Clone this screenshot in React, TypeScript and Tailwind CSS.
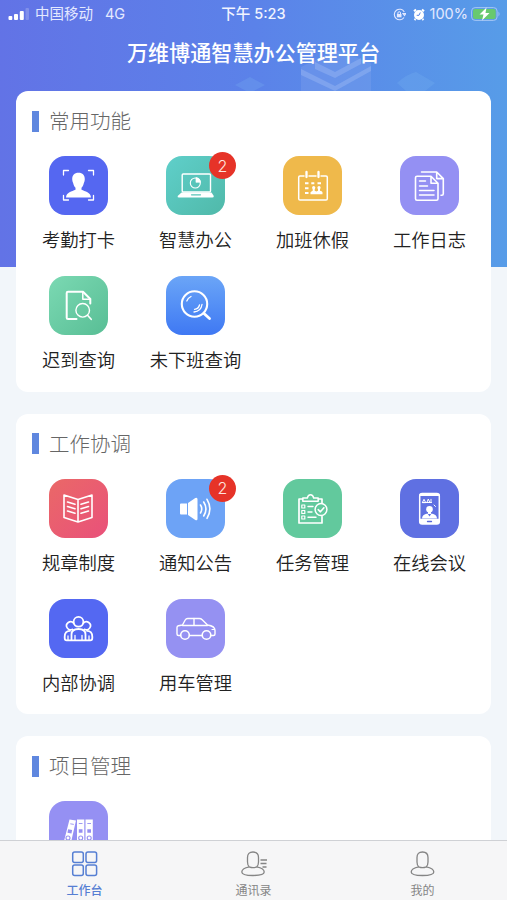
import React from 'react';

interface FeatureItem {
  label?: string;
  tile: string;
  icon: React.ReactNode;
  badge?: number;
}

interface SectionProps {
  title: string;
  items: FeatureItem[];
}

const PunchIcon = () => (
  <>
    <path d="M14.500 19v-4.500h5M39.500 14.500h5V19M14.500 39.500V44h5M39.500 44h5v-4.500" strokeWidth="1.300" />
    <path d="M29.500 16.800c4.200 0 6.300 2.500 6.300 6.500 0 1.500-.4 2.800-1 4-.5 2.500-1.300 3.500-2.300 4.500v2c3.500 1.600 9.300 2.500 9.500 7.700H17c.2-5.200 6-6.100 9.500-7.700v-2c-1-1-1.800-2-2.300-4.500-.6-1.200-1-2.500-1-4 0-4 2.100-6.500 6.300-6.500z" fill="white" stroke="none" />
  </>
);

const LaptopIcon = () => (
  <>
    <rect x="16.200" y="18" width="28.300" height="18" rx="1" strokeWidth="1.400" />
    <path d="M15.500 36.500h30l2.300 3.500q0 1.500-1.500 1.500H13q-1.800 0-1.300-1.500z" fill="white" stroke="none" />
    <path d="M25.500 38.800h9" stroke="#56c3b8" strokeWidth="1.200" />
    <circle cx="29.300" cy="27" r="5" strokeWidth="1.100" />
    <path d="M30 26v-4.500a5 5 0 0 1 4.500 4.500z" fill="white" strokeWidth="0.700" />
  </>
);

const CalendarIcon = () => (
  <>
    <path d="M21 20H17q-1.300 0-1.300 1.300v21.400q0 1.300 1.300 1.300h26q1.300 0 1.300-1.300V21.300Q44.300 20 43 20h-5M26 20h7" strokeWidth="1.500" />
    <path d="M23.500 16v5M35.500 16v5" strokeWidth="2.300" />
    <path d="M22 27.300h3.500M28.300 27.300h3M34.500 27.300h3.500M22 32.200h3.500M22 37h3.500" strokeWidth="1.900" strokeLinecap="butt" />
    <circle cx="30.700" cy="31.700" r="1.600" fill="white" stroke="none" />
    <circle cx="36" cy="31.700" r="1.600" fill="white" stroke="none" />
    <path d="M27.500 38.300v-2q1.500-1.500 2.200-1.500v-2h2v2l1.700.7 1.600-.7v-2h2v2q2 0 2.500 1.500v2z" fill="white" stroke="none" />
  </>
);

const JournalIcon = () => (
  <>
    <path d="M31 20.300H17q-1.500 0-1.500 1.500v21q0 1.500 1.500 1.500h19.500q1.500 0 1.500-1.500V27.200zM31 20.500v6.700h6.800" strokeWidth="1.600" />
    <path d="M21.500 16h15.200l6.600 6.600v15.200q0 1.400-1.400 1.400H41M36.700 16v6.600h6.600" strokeWidth="1.600" />
    <path d="M19.500 25h6M19.500 30h8M19.500 34.500h14.500M19.500 39h14.500" strokeWidth="1.500" />
  </>
);

const DocSearchIcon = () => (
  <>
    <path d="M27.500 43H19q-1.300 0-1.300-1.300V17q0-1.300 1.300-1.300h15l7.300 7.300v4.500" strokeWidth="2" />
    <path d="M33.800 16v7.300h7.300" strokeWidth="1.500" />
    <circle cx="33.700" cy="34.300" r="6.800" strokeWidth="1.400" />
    <path d="M38.500 39.300l3.700 4" strokeWidth="1.600" />
  </>
);

const MagnifierIcon = () => (
  <>
    <circle cx="28.500" cy="28" r="12.700" strokeWidth="2.100" />
    <path d="M38 37.500l5.500 5" strokeWidth="2.800" />
    <path d="M20.800 25q1-3 4.200-4.500M28 36q7-.5 8-7.500M28.500 33.300q4-.3 5-4.300" strokeWidth="1.300" />
  </>
);

const BookIcon = () => (
  <>
    <path d="M29 20.500L15 16v22.500l14 4.500 14-4.500V16zM29 20.500V43" strokeWidth="1.600" />
    <path d="M18.500 23l7.500 2.300M18.500 27.500l7.500 2.300M18.500 32l7.500 2.300M39.500 23L32 25.300M39.500 27.500L32 29.800M39.500 32L32 34.300" strokeWidth="1.600" />
  </>
);

const SpeakerIcon = () => (
  <>
    <path d="M15 24.500h6v11h-6q-1 0-1-1v-9q0-1 1-1zM22 24l7.300-5q2.200-1 2.200 1.200v19.600q0 2.200-2.200 1.200L22 36z" fill="white" stroke="none" />
    <path d="M34.500 26q2.500 4 0 8M37.700 23q4.500 7 0 14M41 20.300q5.800 9.500 0 19" strokeWidth="1.600" />
  </>
);

const ClipboardIcon = () => (
  <>
    <path d="M19.500 20H16v24h23v-6.500M39 24v-4h-3.500" strokeWidth="1.700" />
    <path d="M19.800 22.200V19h4.500q.7-3.300 3.200-3.300t3.200 3.300h4.500v3.200z" strokeWidth="1.500" />
    <path d="M18.800 26h3v3h-3zM18.800 31.500h3v3h-3zM18.800 37h3v3h-3z" strokeWidth="1.200" />
    <path d="M25 27.500h5M25 33h4M25 38.300h8" strokeWidth="1.400" />
    <circle cx="38" cy="30.500" r="5.900" strokeWidth="1.500" />
    <path d="M35.200 30.700l2.200 2.100 3.500-4" strokeWidth="1.600" />
  </>
);

const PhoneMeetingIcon = () => (
  <>
    <rect x="19.700" y="14.500" width="19.600" height="30.500" rx="2.500" strokeWidth="1.500" />
    <path d="M19.500 39.700h20V43q0 2-2 2h-16q-2 0-2-2zM19.500 15h20v2h-20z" fill="white" stroke="none" />
    <path d="M27.500 42.500h4" stroke="#5868da" strokeWidth="1.300" />
    <path d="M22.500 23.300l1.500-3 1.500 3zM27 23.300l1.300-3.300 1.500 3.300M31 23.300v-3M22.500 23.500h9M34 26l1.500 1.500" strokeWidth="1" />
    <circle cx="29.500" cy="30.300" r="3.300" fill="white" stroke="none" />
    <path d="M28 33h3v2h-3z" fill="white" stroke="none" />
    <path d="M22 39.500q0-4 5.500-5l2 3 2-3q5.500 1 5.500 5z" fill="white" stroke="none" />
  </>
);

const TeamIcon = () => (
  <>
    <circle cx="29.500" cy="22.800" r="4.900" strokeWidth="1.800" />
    <path d="M23.500 30.300a4 4 0 1 1 1.200-6M35.500 30.300a4 4 0 1 0-1.200-6" strokeWidth="1.700" />
    <path d="M22.500 41v-5.500q0-5.500 7-5.500t7 5.500V41M21 31.800q-5.300 0-5.300 6V39q0 2.300 2 2.300h23.600q2 0 2-2.300v-1.200q0-6-5.300-6" strokeWidth="1.800" />
    <path d="M26 36.500V41M33 36.500V41M19 37v4M40 37v4" strokeWidth="1.300" />
  </>
);

const CarIcon = () => (
  <>
    <path d="M14.500 36.500h-2q-1.500 0-1.500-1.500v-6.500q0-1.500 1.500-1.800l4-.7 2.700-5q.9-1.500 2.500-1.500h11.500q1.800 0 3 1.200L41.500 26q7.500 1 7.500 5.500V35q0 1.500-1.500 1.500H45M23.500 36.500H36" strokeWidth="1.400" />
    <path d="M16.500 26.500h25M28 19.500v7" strokeWidth="1.400" />
    <circle cx="19" cy="36" r="4.300" strokeWidth="1.600" />
    <circle cx="40.500" cy="36" r="4.300" strokeWidth="1.600" />
    <path d="M46 30.500h2.500" strokeWidth="1.200" />
  </>
);

const BindersIcon = () => (
  <>
    <path d="M20.500 18.500l6.500 1-5.500 24-7-1.500zM28 18.500h7.300v25H28zM36.500 18.500h7.300v25h-7.300z" fill="white" stroke="none" />
    <path d="M21.300 22.800l3.500.6M29.800 22.500h3.700M38.300 22.500h3.700" stroke="#958ff2" strokeWidth="0.900" strokeLinecap="butt" />
    <path d="M18.800 30l4 .8M29.800 30h3.700M38.300 30h3.700" stroke="#958ff2" strokeWidth="3.500" strokeLinecap="butt" />
    <circle cx="19" cy="37" r="2" stroke="#958ff2" strokeWidth="1.100" />
    <circle cx="31.700" cy="37" r="2" stroke="#958ff2" strokeWidth="1.100" />
    <circle cx="40.200" cy="37" r="2" stroke="#958ff2" strokeWidth="1.100" />
  </>
);

const commonItems: FeatureItem[] = [
  { label: '考勤打卡', tile: 'bg-[#5567f1]', icon: <PunchIcon /> },
  { label: '智慧办公', tile: 'bg-linear-to-br from-[#5fcfca] to-[#50b9a9]', icon: <LaptopIcon />, badge: 2 },
  { label: '加班休假', tile: 'bg-[#efb94b]', icon: <CalendarIcon /> },
  { label: '工作日志', tile: 'bg-[#9490f3]', icon: <JournalIcon /> },
  { label: '迟到查询', tile: 'bg-linear-to-br from-[#7bd9b3] to-[#58be95]', icon: <DocSearchIcon /> },
  { label: '未下班查询', tile: 'bg-linear-to-b from-[#6ba5f7] to-[#3f78f3]', icon: <MagnifierIcon /> },
];

const teamworkItems: FeatureItem[] = [
  { label: '规章制度', tile: 'bg-linear-to-br from-[#ea6867] to-[#e9507a]', icon: <BookIcon /> },
  { label: '通知公告', tile: 'bg-[#6da3f6]', icon: <SpeakerIcon />, badge: 2 },
  { label: '任务管理', tile: 'bg-[#62c99d]', icon: <ClipboardIcon /> },
  { label: '在线会议', tile: 'bg-[#5f70e2]', icon: <PhoneMeetingIcon /> },
  { label: '内部协调', tile: 'bg-[#5468f2]', icon: <TeamIcon /> },
  { label: '用车管理', tile: 'bg-[#9591f2]', icon: <CarIcon /> },
];

const projectItems: FeatureItem[] = [
  { tile: 'bg-[#9590f3]', icon: <BindersIcon /> },
];

const Feature: React.FC<{ item: FeatureItem }> = ({ item }) => (
  <div className="flex h-[120px] flex-col items-center">
    <div className={`relative size-[59px] rounded-[16px] ${item.tile}`}>
      <svg viewBox="0 0 59 59" className="size-full" fill="none" stroke="white" strokeLinecap="round" strokeLinejoin="round">
        {item.icon}
      </svg>
      {item.badge && (
        <span className="absolute -top-[4px] -right-[11px] flex size-[27px] items-center justify-center rounded-full bg-[#e63328] text-[16px] font-light text-[#ffe3df]">
          {item.badge}
        </span>
      )}
    </div>
    {item.label && (
      <span className="mt-[12px] text-[18.300px] leading-[26px] font-[350] whitespace-nowrap text-[#222222]">{item.label}</span>
    )}
  </div>
);

const Section: React.FC<SectionProps> = ({ title, items }) => (
  <section className="h-[300.500px] shrink-0 rounded-[12px] bg-white pt-[15px]">
    <div className="flex h-[30px] items-center gap-[10px] pl-[16px]">
      <span className="h-[21px] w-[7px] bg-[#5f87df]" />
      <h2 className="pt-[2px] text-[20.500px] leading-[30px] font-light text-[#666666]">{title}</h2>
    </div>
    <div className="mt-[20px] ml-[4px] grid w-[468px] grid-cols-4">
      {items.map((item, i) => <Feature key={i} item={item} />)}
    </div>
  </section>
);

const StatusBar = () => (
  <div className="grid h-[28px] grid-cols-3 items-center text-[14.500px] leading-none text-[#e4e9ff]">
    <div className="flex items-center pl-[8px]">
      <svg width="22" height="13" viewBox="0 0 22 13" fill="white">
        <rect x="0.500" y="8" width="3.800" height="4" rx="1" />
        <rect x="6" y="6" width="4" height="6" rx="1" />
        <rect x="11.800" y="3" width="4" height="9" rx="1" />
        <rect x="17.500" y="0" width="3.500" height="12" rx="1" opacity="0.200" />
      </svg>
      <span className="ml-[5px]">中国移动</span>
      <span className="ml-[12px]">4G</span>
    </div>
    <div className="text-center font-medium whitespace-nowrap text-[#f1f4ff]">下午 5:23</div>
    <div className="flex items-center justify-end pr-[6px]">
      <svg width="13" height="13" viewBox="0 0 13 13" fill="none" stroke="#e4e9ff">
        <path d="M11.300 4A5.300 5.300 0 1 0 11 9.500M10 5.500h2.800l-1.300 2z" strokeWidth="1.100" />
        <rect x="3.900" y="6" width="4.600" height="3.300" fill="#e4e9ff" stroke="none" />
        <path d="M4.900 6V5a1.300 1.300 0 0 1 2.600 0v1" />
      </svg>
      <svg className="ml-[7px]" width="12" height="13" viewBox="0 0 12 13" fill="white">
        <circle cx="6" cy="7" r="5" />
        <path d="M1 3.300L3 1.500M9 1.500l2 1.800M2.500 11l-1 1M9.500 11l1 1" stroke="white" strokeWidth="2" />
        <path d="M7.300 4.500L6 7.300H3.700" stroke="#5585e8" fill="none" />
      </svg>
      <span className="ml-[5px] text-[14.500px]">100%</span>
      <svg className="ml-[3px]" width="30" height="14" viewBox="0 0 30 14" fill="none">
        <rect x="0.600" y="0.600" width="25.500" height="12.800" rx="3.500" stroke="#a5c6f4" />
        <rect x="2" y="2" width="22.700" height="10" rx="2" fill="#68c96f" />
        <path d="M27.500 4.500q2 2.500 0 5z" fill="#a5c6f4" />
        <path d="M15.500.5L8.500 7.500h4l-1.500 6 7.500-7.500h-4z" fill="white" />
      </svg>
    </div>
  </div>
);

const TabBar = () => (
  <nav className="grid h-[60px] shrink-0 grid-cols-3 border-t border-[#cfd1d5] bg-[#f6f6f7] text-[12px] text-[#858585]">
    <div className="flex flex-col items-center pt-[10px] text-[#567fd3]">
      <svg width="27" height="27" viewBox="0 0 27 27" fill="none" stroke="currentColor" strokeWidth="1.500">
        <rect x="1.700" y="1" width="10.600" height="10.600" rx="2" />
        <rect x="15" y="1" width="10.600" height="10.600" rx="2" />
        <rect x="1.700" y="14" width="10.600" height="10.600" rx="2" />
        <rect x="15" y="14" width="10.600" height="10.600" rx="2" />
      </svg>
      <span className="mt-[5px] leading-[16px] font-medium">工作台</span>
    </div>
    <div className="flex flex-col items-center pt-[10px]">
      <svg width="27" height="27" viewBox="0 0 27 27" fill="none" stroke="currentColor" strokeWidth="1.300">
        <path d="M9.300 15.800Q7.500 14.500 7.500 11V6.500q0-5.500 5.500-5.500t5.500 5.500V11q0 3.500-1.800 4.800M9.300 15.800Q1.800 17.300 1.800 21q0 3.500 11.200 3.500T24.200 21q0-3.700-7.500-5.200Q13 17.500 9.300 15.800M20.500 9h6.500M20.500 12.500h6M22.500 16h4" />
      </svg>
      <span className="mt-[5px] leading-[16px]">通讯录</span>
    </div>
    <div className="flex flex-col items-center pt-[10px]">
      <svg width="27" height="27" viewBox="0 0 27 27" fill="none" stroke="currentColor" strokeWidth="1.300">
        <path d="M9.800 15.800Q8 14.500 8 11V6.500Q8 1 13.500 1T19 6.500V11q0 3.500-1.800 4.800M9.800 15.800Q2.200 17.300 2.200 21q0 3.500 11.300 3.500T24.800 21q0-3.700-7.600-5.200-3.700 1.700-7.400 0" />
      </svg>
      <span className="mt-[5px] leading-[16px]">我的</span>
    </div>
  </nav>
);

export default function App() {
  return (
    <div className="relative isolate flex h-[900px] w-[507px] flex-col overflow-hidden bg-[#f2f6fa] font-['Inter','Noto_Sans_CJK_SC',sans-serif]">
      <div className="absolute inset-x-0 top-0 -z-10 h-[267px] bg-linear-to-r from-[#6273e6] via-[#5b82e9] to-[#579ce8]">
        <svg className="size-full" viewBox="0 0 507 267" fill="none">
          <path d="M301 67l35-17 35 13v28h-70z" fill="#8eabf0" opacity="0.250" />
          <path d="M315 62l20 10 26-14v6l-26 14-20-9zM301 69l34 17 36-20v5L335 91l-34-16z" fill="#a9c3f5" opacity="0.350" />
          <path d="M397 83q10-9 19-11l19 11-10 8h-19zM235 85l15-8 15 8-15 8z" fill="#80baf0" opacity="0.220" />
        </svg>
      </div>
      <StatusBar />
      <h1 className="h-[63px] pt-[10px] text-center text-[21.100px] leading-[32px] font-medium text-white">万维博通智慧办公管理平台</h1>
      <main className="flex min-h-0 flex-1 flex-col gap-[22px] overflow-hidden px-[16px]">
        <Section title="常用功能" items={commonItems} />
        <Section title="工作协调" items={teamworkItems} />
        <Section title="项目管理" items={projectItems} />
      </main>
      <TabBar />
    </div>
  );
}
